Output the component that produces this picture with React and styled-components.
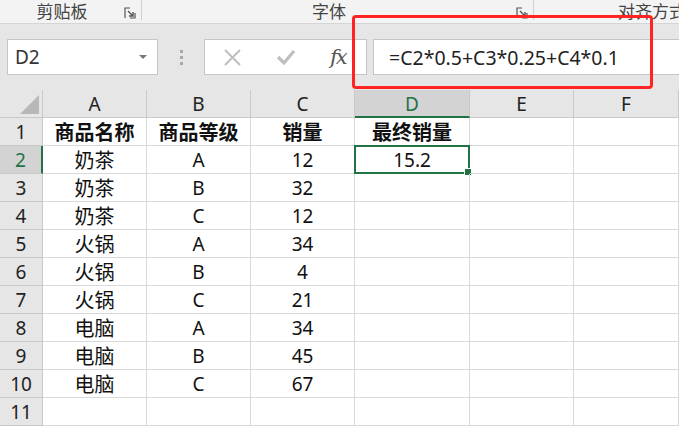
import React from "react";
import styled, { createGlobalStyle } from "styled-components";

const Global = createGlobalStyle`
  html, body { margin: 0; padding: 0; background: #fff; }
  body { font-family: "Noto Sans CJK SC", "Noto Sans", sans-serif; overflow: hidden; }
`;

const Page = styled.div`
  width: 679px;
  height: 427px;
  overflow: hidden;
  position: relative;
`;

// 功能区底部标签
const Ribbon = styled.div`
  height: 23px;
  background: #f3f3f3;
  border-bottom: 1px solid #d5d5d5;
  display: flex;
  align-items: flex-start;
  font-size: 17px;
  color: #444;
`;

const Group = styled.div`
  width: ${(p) => p.w}px;
  flex-shrink: 0;
  display: flex;
  align-items: center;
  height: 19px;
  line-height: 19px;
  padding-top: 1px;
  border-right: ${(p) => (p.sep ? "1px solid #cfcfcf" : "none")};
  white-space: nowrap;
`;

const GroupLabel = styled.span`
  flex: 1;
  text-align: center;
  padding-left: ${(p) => p.pl || 0}px;
`;

const Launcher = styled.svg`
  width: 12px;
  height: 12px;
  margin-right: 5px;
  margin-top: 4px;
`;

const FormulaArea = styled.div`
  height: 66px;
  background: #e6e6e6;
  display: flex;
  align-items: flex-start;
  padding: 15px 0 0 7px;
  box-sizing: border-box;
`;

const NameBox = styled.div`
  width: 151px;
  height: 36px;
  box-sizing: border-box;
  background: #fff;
  border: 1px solid #c6c6c6;
  display: flex;
  align-items: center;
  padding: 0 10px 0 7px;
  font-size: 19px;
  color: #333;
  font-family: "Noto Sans", sans-serif;
`;

const NameText = styled.span`
  flex: 1;
`;

const Caret = styled.span`
  width: 0;
  height: 0;
  border-left: 4px solid transparent;
  border-right: 4px solid transparent;
  border-top: 4px solid #777;
`;

const Dots = styled.div`
  width: 46px;
  height: 36px;
  display: flex;
  flex-direction: column;
  align-items: center;
  justify-content: center;
  gap: 3px;
`;

const Dot = styled.span`
  width: 3px;
  height: 3px;
  background: #a8a8a8;
`;

const FxBox = styled.div`
  width: 163px;
  height: 36px;
  box-sizing: border-box;
  background: #fff;
  border: 1px solid #c6c6c6;
  display: flex;
  align-items: center;
  padding-left: 18px;
  gap: 34px;
`;

const FxText = styled.span`
  font-family: "DejaVu Serif", "Liberation Serif", serif;
  font-style: italic;
  font-size: 21px;
  color: #555;
  margin-left: 0;
  letter-spacing: -2px;
`;

const FormulaInput = styled.div`
  flex: 1;
  height: 36px;
  box-sizing: border-box;
  background: #fff;
  border: 1px solid #c6c6c6;
  border-right: none;
  margin-left: 6px;
  display: flex;
  align-items: center;
  padding-left: 15px;
  font-size: 19.5px;
  color: #222;
  font-family: "Noto Sans", sans-serif;
`;

const RedMark = styled.div`
  position: absolute;
  left: 352px;
  top: 15px;
  width: 301px;
  height: 74px;
  box-sizing: border-box;
  border: 3px solid #ff2323;
  border-radius: 4px;
`;

// 表格
const Grid = styled.div`
  display: grid;
  grid-template-columns: 43px 104px 104px 104px 115px 104px 1fr;
  grid-auto-rows: 28px;
`;

const ColHead = styled.div`
  box-sizing: border-box;
  background: ${(p) => (p.active ? "#d3d3d3" : "#e6e6e6")};
  border-right: 1px solid #c9c9c9;
  border-bottom: ${(p) => (p.active ? "2px solid #217346" : "1px solid #c9c9c9")};
  color: ${(p) => (p.active ? "#217346" : "#222")};
  display: flex;
  align-items: center;
  justify-content: center;
  font-size: 19px;
  font-family: "Noto Sans", sans-serif;
  padding-top: ${(p) => (p.active ? 1 : 0)}px;
`;

const Corner = styled.div`
  box-sizing: border-box;
  background: #e6e6e6;
  border-right: 1px solid #c9c9c9;
  border-bottom: 1px solid #c9c9c9;
  display: flex;
  align-items: flex-end;
  justify-content: flex-end;
  padding: 0 3px 3px 0;
`;

const Tri = styled.span`
  width: 0;
  height: 0;
  border-left: 19px solid transparent;
  border-bottom: 19px solid #b8b8b8;
`;

const RowHead = styled.div`
  box-sizing: border-box;
  background: ${(p) => (p.active ? "#d3d3d3" : "#e6e6e6")};
  border-right: ${(p) => (p.active ? "2px solid #217346" : "1px solid #c9c9c9")};
  border-bottom: 1px solid #c9c9c9;
  color: ${(p) => (p.active ? "#217346" : "#222")};
  display: flex;
  align-items: center;
  justify-content: center;
  font-size: 19px;
  font-family: "Noto Sans", sans-serif;
`;

const Cell = styled.div`
  box-sizing: border-box;
  border-right: 1px solid #d9d9d9;
  border-bottom: 1px solid #d9d9d9;
  display: flex;
  align-items: center;
  justify-content: center;
  font-size: ${(p) => (p.cjk ? 20 : 19)}px;
  font-family: ${(p) => (p.cjk ? '"Noto Sans CJK SC", sans-serif' : '"Noto Sans", sans-serif')};
  font-weight: ${(p) => (p.bold ? 700 : 400)};
  color: #111;
  position: relative;
  white-space: nowrap;
`;

const Selection = styled.div`
  position: absolute;
  left: -1px;
  top: -1px;
  right: -1px;
  bottom: -1px;
  border: 2px solid #217346;
`;

const Handle = styled.span`
  position: absolute;
  right: -4px;
  bottom: -4px;
  width: 6px;
  height: 6px;
  background: #217346;
  border: 1px solid #fff;
`;

const cols = ["A", "B", "C", "D", "E", "F"];

const rows = [
  ["商品名称", "商品等级", "销量", "最终销量"],
  ["奶茶", "A", "12", "15.2"],
  ["奶茶", "B", "32"],
  ["奶茶", "C", "12"],
  ["火锅", "A", "34"],
  ["火锅", "B", "4"],
  ["火锅", "C", "21"],
  ["电脑", "A", "34"],
  ["电脑", "B", "45"],
  ["电脑", "C", "67"],
  [],
];

const isCjk = (s) => /[\u4e00-\u9fff]/.test(s || "");

function LauncherIcon() {
  return (
    <Launcher viewBox="0 0 12 12">
      <path d="M1 11V1h5M11 6v5H6" fill="none" stroke="#555" strokeWidth="1.2" />
      <path d="M4 4l5 5M9 5v4H5" fill="none" stroke="#555" strokeWidth="1.4" />
    </Launcher>
  );
}

function App() {
  return (
    <Page>
      <Global />
      <Ribbon>
        <Group w={141} sep>
          <GroupLabel pl={0}>剪贴板</GroupLabel>
          <LauncherIcon />
        </Group>
        <Group w={391} sep>
          <GroupLabel pl={0}>字体</GroupLabel>
          <LauncherIcon />
        </Group>
        <Group w={147}>
          <GroupLabel pl={84}>对齐方式</GroupLabel>
        </Group>
      </Ribbon>
      <FormulaArea>
        <NameBox>
          <NameText>D2</NameText>
          <Caret />
        </NameBox>
        <Dots>
          <Dot />
          <Dot />
          <Dot />
        </Dots>
        <FxBox>
          <svg width="19" height="19" viewBox="0 0 19 19">
            <path d="M2 2l15 15M17 2L2 17" stroke="#bfbfbf" strokeWidth="2" fill="none" />
          </svg>
          <svg width="20" height="18" viewBox="0 0 20 18">
            <path d="M2 9l6 6L18 3" stroke="#bfbfbf" strokeWidth="3.2" fill="none" />
          </svg>
          <FxText>fx</FxText>
        </FxBox>
        <FormulaInput>=C2*0.5+C3*0.25+C4*0.1</FormulaInput>
      </FormulaArea>
      <Grid>
        <Corner>
          <Tri />
        </Corner>
        {cols.map((c) => (
          <ColHead key={c} active={c === "D"}>
            {c}
          </ColHead>
        ))}
        {rows.map((r, i) => (
          <React.Fragment key={i}>
            <RowHead active={i === 1}>{i + 1}</RowHead>
            {cols.map((c, j) => (
              <Cell key={c} bold={i === 0} cjk={isCjk(r[j])}>
                {r[j] || ""}
                {i === 1 && j === 3 && (
                  <Selection>
                    <Handle />
                  </Selection>
                )}
              </Cell>
            ))}
          </React.Fragment>
        ))}
      </Grid>
      <RedMark />
    </Page>
  );
}

export default App;
